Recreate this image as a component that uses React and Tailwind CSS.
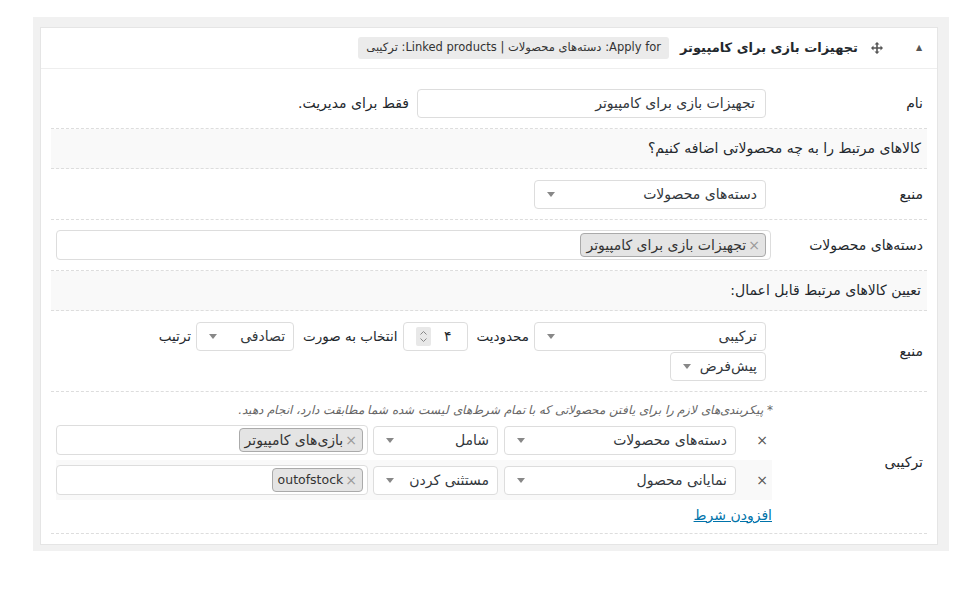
import React from 'react';

const font = { fontFamily: 'Tahoma, "DejaVu Sans", sans-serif' };

const Caret = () => (
  <span className="inline-block w-0 h-0 border-l-[4px] border-r-[4px] border-t-[5px] border-l-transparent border-r-transparent border-t-[#888]" />
);

const Select = ({ value, className = '' }) => (
  <div className={`h-[29px] flex items-center justify-between bg-white border border-[#ddd] rounded-[4px] pr-[8px] pl-[12px] text-[14px] text-[#32373c] shrink-0 ${className}`}>
    <span>{value}</span>
    <Caret />
  </div>
);

const Tag = ({ label, latin }) => (
  <div className="h-[24px] flex items-center gap-[2px] bg-[#e4e4e4] border border-[#aaa] rounded-[4px] px-[5px] text-[14px] text-[#333]">
    <span className="text-[#999] text-[14px] leading-none">×</span>
    <span dir={latin ? 'ltr' : undefined} className={latin ? 'text-[12.5px]' : ''}>{label}</span>
  </div>
);

const MultiBox = ({ children, className = '' }) => (
  <div className={`h-[30px] flex items-center bg-white border border-[#ddd] rounded-[4px] px-[4px] ${className}`}>
    {children}
  </div>
);

const Row = ({ label, children, className = '' }) => (
  <div className={`flex items-center border-b border-dashed border-[#ddd] ${className}`}>
    <div className="w-[155px] shrink-0 pr-[4px] text-[14px] text-[#23282d]">{label}</div>
    <div className="flex-1 pl-[5px]">{children}</div>
  </div>
);

const Heading = ({ text }) => (
  <div className="h-[40px] flex items-center bg-[#f9f9f9] border-b border-dashed border-[#ddd] pr-[6px] text-[14px] text-[#23282d]">
    {text}
  </div>
);

const MoveIcon = () => (
  <svg width="12" height="12" viewBox="0 0 12 12" className="text-[#555]">
    <path d="M6 0 L8.5 2.5 H6.8 V5.2 H9.5 V3.5 L12 6 L9.5 8.5 V6.8 H6.8 V9.5 H8.5 L6 12 L3.5 9.5 H5.2 V6.8 H2.5 V8.5 L0 6 L2.5 3.5 V5.2 H5.2 V2.5 H3.5 Z" fill="currentColor" />
  </svg>
);

const Spinner = () => (
  <div className="w-[15px] h-[19px] bg-[#e8e8e8] rounded-[2px] flex flex-col items-center justify-center">
    <svg width="9" height="15" viewBox="0 0 9 15" fill="none" stroke="#888" strokeWidth="1">
      <path d="M1.5 5.5 L4.5 2.5 L7.5 5.5" />
      <path d="M1.5 9.5 L4.5 12.5 L7.5 9.5" />
    </svg>
  </div>
);

export default function App() {
  return (
    <div className="w-[976px] h-[616px] bg-white pl-[33px] pt-[17px]" style={font}>
      <div className="w-[916px] bg-[#f1f1f1] pt-[10px] pl-[7px] pr-[11px] pb-[6px]">
        <div dir="rtl" className="bg-white border border-[#e5e5e5]">
          {/* header */}
          <div className="h-[41px] flex items-center border-b border-[#eee] pr-[12px]">
            <span className="text-[#555] text-[8px] w-[12px] text-center">▲</span>
            <span className="mr-[30px] flex items-center"><MoveIcon /></span>
            <span className="mr-[13px] text-[13px] font-bold text-[#23282d]">تجهیزات بازی برای کامپیوتر</span>
            <span className="mr-[11px] h-[22px] flex items-center bg-[#ebebeb] rounded-[3px] px-[8px] text-[11.5px] text-[#333]">
              Apply for: دسته‌های محصولات | Linked products: ترکیبی
            </span>
          </div>

          {/* body */}
          <div className="px-[10px] pt-[10px] pb-[10px]">
            <Row label="نام" className="pt-[10px] pb-[10px]">
              <div className="flex items-center gap-[8px] mr-[6px]">
                <div className="w-[349px] h-[29px] flex items-center border border-[#ddd] rounded-[4px] px-[10px] text-[14px] text-[#32373c]">
                  تجهیزات بازی برای کامپیوتر
                </div>
                <span className="text-[14px] text-[#23282d]">فقط برای مدیریت.</span>
              </div>
            </Row>

            <Heading text="کالاهای مرتبط را به چه محصولاتی اضافه کنیم؟" />

            <Row label="منبع" className="pt-[11px] pb-[10px]">
              <Select value="دسته‌های محصولات" className="w-[232px] mr-[6px]" />
            </Row>

            <Row label="دسته‌های محصولات" className="pt-[10px] pb-[10px]">
              <MultiBox className="mr-[1px]">
                <Tag label="تجهیزات بازی برای کامپیوتر" />
              </MultiBox>
            </Row>

            <Heading text="تعیین کالاهای مرتبط قابل اعمال:" />

            <Row label="منبع" className="pt-[11px] pb-[10px]">
              <div className="mr-[6px] flex flex-col gap-[1px]">
                <div className="flex items-center text-[13.5px] text-[#23282d]">
                  <Select value="ترکیبی" className="w-[232px]" />
                  <span className="mr-[5px]">محدودیت</span>
                  <div className="mr-[8px] w-[65px] h-[29px] flex items-center justify-between border border-[#ddd] rounded-[4px] pr-[16px] pl-[12px] text-[14px]">
                    <span>۴</span>
                    <Spinner />
                  </div>
                  <span className="mr-[6px]">انتخاب به صورت</span>
                  <Select value="تصادفی" className="w-[98px] mr-[9px]" />
                  <span className="mr-[5px]">ترتیب</span>
                </div>
                <Select value="پیش‌فرض" className="w-[96px]" />
              </div>
            </Row>

            <Row label="ترکیبی" className="pt-[10px] pb-[10px]">
              <div className="flex flex-col">
                <div className="h-[16px] flex items-center -mr-[1px] text-[12px] italic text-[#666]">
                  * پیکربندی‌های لازم را برای یافتن محصولاتی که با تمام شرط‌های لیست شده شما مطابقت دارد، انجام دهید.
                </div>
                <div className="mt-[2px]">
                  <div className="h-[40px] flex items-center">
                    <div className="w-[36px] shrink-0 pr-[4px] text-[14px] text-[#555]">×</div>
                    <Select value="دسته‌های محصولات" className="w-[232px]" />
                    <Select value="شامل" className="w-[125px] mr-[6px]" />
                    <MultiBox className="flex-1 mr-[5px] h-[29px]">
                      <Tag label="بازی‌های کامپیوتر" />
                    </MultiBox>
                  </div>
                  <div className="h-[40px] flex items-center bg-[#f9f9f9]">
                    <div className="w-[36px] shrink-0 pr-[4px] text-[14px] text-[#555]">×</div>
                    <Select value="نمایانی محصول" className="w-[232px]" />
                    <Select value="مستثنی کردن" className="w-[125px] mr-[6px]" />
                    <MultiBox className="flex-1 mr-[5px] h-[29px]">
                      <Tag label="outofstock" latin />
                    </MultiBox>
                  </div>
                </div>
                <div className="h-[23px] flex items-end">
                  <a className="text-[14px] text-[#0073aa] underline leading-[16px]">افزودن شرط</a>
                </div>
              </div>
            </Row>
          </div>
        </div>
      </div>
    </div>
  );
}
